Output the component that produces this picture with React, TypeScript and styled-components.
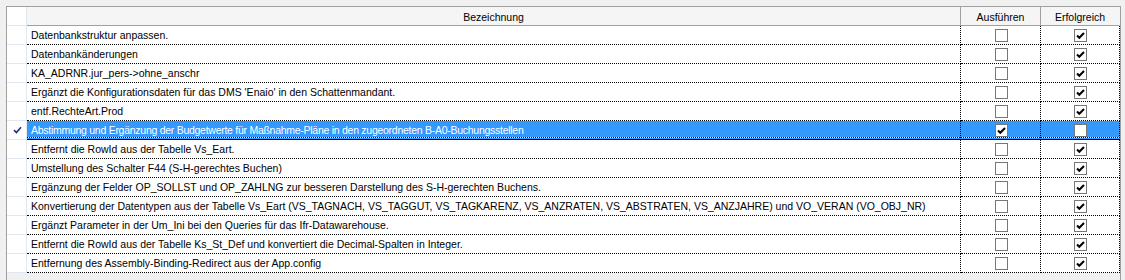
import React from "react";
import styled, { createGlobalStyle } from "styled-components";

const GlobalStyle = createGlobalStyle`
  body {
    margin: 0;
    background: #f0f0f0;
    font-family: "Liberation Sans", Arial, sans-serif;
    font-size: 10.5px;
  }
  * { box-sizing: border-box; }
`;

const Grid = styled.div`
  margin: 6px 0 0 6px;
  width: 1115px;
  height: 274px;
  border-left: 1px solid #a0a0a0;
  border-top: 1px solid #a0a0a0;
  border-right: 1px solid #a0a0a0;
  background: #f0f0f0;
`;

const Columns = "20px 934px 80px 79px";

const HeaderRow = styled.div`
  display: grid;
  grid-template-columns: ${Columns};
  height: 19px;
`;

const Corner = styled.div`
  background: #fff;
  border-right: 1px solid #dfe9f5;
  border-bottom: 1px solid #dfe9f5;
`;

const HeaderCell = styled.div<{ $last?: boolean }>`
  background: #f5f5f5;
  border-bottom: 1px solid #a0a0a0;
  border-right: 1px solid ${(p) => (p.$last ? "transparent" : "#a0a0a0")};
  display: flex;
  align-items: center;
  justify-content: center;
  color: #000;
  padding-top: 1px;
`;

const Row = styled.div`
  display: grid;
  grid-template-columns: ${Columns};
  height: 19px;
`;

const RowHeader = styled.div`
  background: #fff;
  border-right: 1px solid #dfe9f5;
  border-bottom: 1px solid #dfe9f5;
  display: flex;
  align-items: center;
  justify-content: center;
  padding-left: 1px;
`;

const Cell = styled.div<{ $selected?: boolean; $center?: boolean }>`
  background: ${(p) =>
    p.$selected
      ? "repeating-linear-gradient(to right, #000 0 1px, #fff 1px 2px) left bottom 1px / 100% 1px no-repeat, #3399ff"
      : "#fff"};
  color: ${(p) => (p.$selected ? "#fff" : "#000")};
  letter-spacing: ${(p) => (p.$selected ? "-0.27px" : "normal")};
  border-bottom: 1px ${(p) => (p.$selected ? "solid #000" : "dotted #000")};
  border-right: 1px dotted #000;
  display: flex;
  align-items: center;
  justify-content: ${(p) => (p.$center ? "center" : "flex-start")};
  padding-left: ${(p) => (p.$center ? "0" : "4px")};
  white-space: nowrap;
  overflow: hidden;
`;

const Box = styled.div`
  width: 13px;
  height: 13px;
  border: 1px solid #777;
  background: #fff;
  display: flex;
  align-items: center;
  justify-content: center;
  margin-left: 1px;
`;

const Check = () => (
  <svg width="11" height="11" viewBox="0 0 11 11">
    <path d="M2 5.5 L4.3 7.8 L9 3" stroke="#000" strokeWidth="2" fill="none" />
  </svg>
);

const CheckBox = ({ checked }: { checked: boolean }) => (
  <Box>{checked && <Check />}</Box>
);

const RowMark = () => (
  <svg width="9" height="8" viewBox="0 0 9 8">
    <path d="M1 4.2 L3.4 6.5 L8 1.2" stroke="#1d2f7a" strokeWidth="1.6" fill="none" />
  </svg>
);

const rows = [
  { text: "Datenbankstruktur anpassen.", run: false, ok: true },
  { text: "Datenbankänderungen", run: false, ok: true },
  { text: "KA_ADRNR.jur_pers->ohne_anschr", run: false, ok: true },
  { text: "Ergänzt die Konfigurationsdaten für das DMS 'Enaio' in den Schattenmandant.", run: false, ok: true },
  { text: "entf.RechteArt.Prod", run: false, ok: true },
  {
    text: "Abstimmung und Ergänzung der Budgetwerte für Maßnahme-Pläne in den zugeordneten B-A0-Buchungsstellen",
    run: true,
    ok: false,
    selected: true,
  },
  { text: "Entfernt die RowId aus der Tabelle Vs_Eart.", run: false, ok: true },
  { text: "Umstellung des Schalter F44 (S-H-gerechtes Buchen)", run: false, ok: true },
  { text: "Ergänzung der Felder OP_SOLLST und OP_ZAHLNG zur besseren Darstellung des S-H-gerechten Buchens.", run: false, ok: true },
  {
    text: "Konvertierung der Datentypen aus der Tabelle Vs_Eart (VS_TAGNACH, VS_TAGGUT, VS_TAGKARENZ, VS_ANZRATEN, VS_ABSTRATEN, VS_ANZJAHRE) und VO_VERAN (VO_OBJ_NR)",
    run: false,
    ok: true,
  },
  { text: "Ergänzt Parameter in der Um_Ini bei den Queries für das Ifr-Datawarehouse.", run: false, ok: true },
  { text: "Entfernt die RowId aus der Tabelle Ks_St_Def und konvertiert die Decimal-Spalten in Integer.", run: false, ok: true },
  { text: "Entfernung des Assembly-Binding-Redirect aus der App.config", run: false, ok: true },
];

function App() {
  return (
    <>
      <GlobalStyle />
      <Grid>
        <HeaderRow>
          <Corner />
          <HeaderCell>Bezeichnung</HeaderCell>
          <HeaderCell>Ausführen</HeaderCell>
          <HeaderCell $last>Erfolgreich</HeaderCell>
        </HeaderRow>
        {rows.map((r, i) => (
          <Row key={i}>
            <RowHeader>{r.selected && <RowMark />}</RowHeader>
            <Cell $selected={r.selected}>{r.text}</Cell>
            <Cell $selected={r.selected} $center>
              <CheckBox checked={r.run} />
            </Cell>
            <Cell $selected={r.selected} $center>
              <CheckBox checked={r.ok} />
            </Cell>
          </Row>
        ))}
      </Grid>
    </>
  );
}

export default App;
